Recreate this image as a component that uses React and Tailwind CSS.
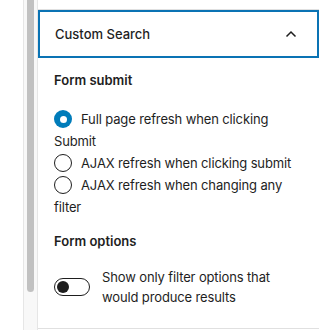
import React from "react";

function Radio({ checked }) {
  return checked ? (
    <span className="inline-flex align-middle relative -top-[1px] mr-[9px] w-[18px] h-[18px] rounded-full bg-[#007cba] items-center justify-center">
      <span className="w-[7px] h-[7px] rounded-full bg-white" />
    </span>
  ) : (
    <span className="inline-block align-middle relative -top-[1px] mr-[9px] w-[18px] h-[18px] rounded-full border border-[#1e1e1e] bg-white" />
  );
}

export default function App() {
  return (
    <div
      className="w-[319px] h-[330px] flex bg-white text-[#1e1e1e] overflow-hidden"
      style={{ fontFamily: "Inter, 'Noto Sans', sans-serif" }}
    >
      <div className="w-[23px] shrink-0 bg-white" />
      <div className="w-[15px] shrink-0 bg-[#f8f8f8] border-l border-r border-[#e6e6e6] flex justify-center">
        <div className="w-[7px] h-[292px] bg-[#c1c1c1] rounded-b-full" />
      </div>
      <div className="flex-1 flex flex-col">
        <div className="h-[9px] shrink-0" />
        <div className="border-t border-b border-[#e0e0e0] flex flex-col">
          <div className="h-[48px] border-2 border-[#0a73b4] flex items-center justify-between pl-[15px] pr-[20px]">
            <span className="text-[13px] font-medium relative top-[1px]">Custom Search</span>
            <svg width="12" height="8" viewBox="0 0 12 8" fill="none">
              <path d="M1.5 6.5 L6 2 L10.5 6.5" stroke="#1e1e1e" strokeWidth="1.5" />
            </svg>
          </div>
          <div className="pl-[16px] pr-[16px] pt-[12px] pb-[21px] text-[13px]">
            <div className="leading-[20px] font-semibold">Form submit</div>
            <div className="mt-[18px] leading-[22px] tracking-[-0.13px]">
              <div>
                <Radio checked />
                Full page refresh when clicking Submit
              </div>
              <div>
                <Radio />
                AJAX refresh when clicking submit
              </div>
              <div>
                <Radio />
                AJAX refresh when changing any filter
              </div>
            </div>
            <div className="mt-[13px] leading-[20px] font-semibold">Form options</div>
            <div className="mt-[16px] flex items-center gap-[12px]">
              <div className="w-[36px] h-[18px] shrink-0 rounded-full border border-[#1e1e1e] bg-white flex items-center pl-[2px]">
                <div className="w-[12px] h-[12px] rounded-full bg-[#1e1e1e]" />
              </div>
              <div className="leading-[20px] tracking-[-0.13px]">
                Show only filter options that would produce results
              </div>
            </div>
          </div>
        </div>
      </div>
    </div>
  );
}
